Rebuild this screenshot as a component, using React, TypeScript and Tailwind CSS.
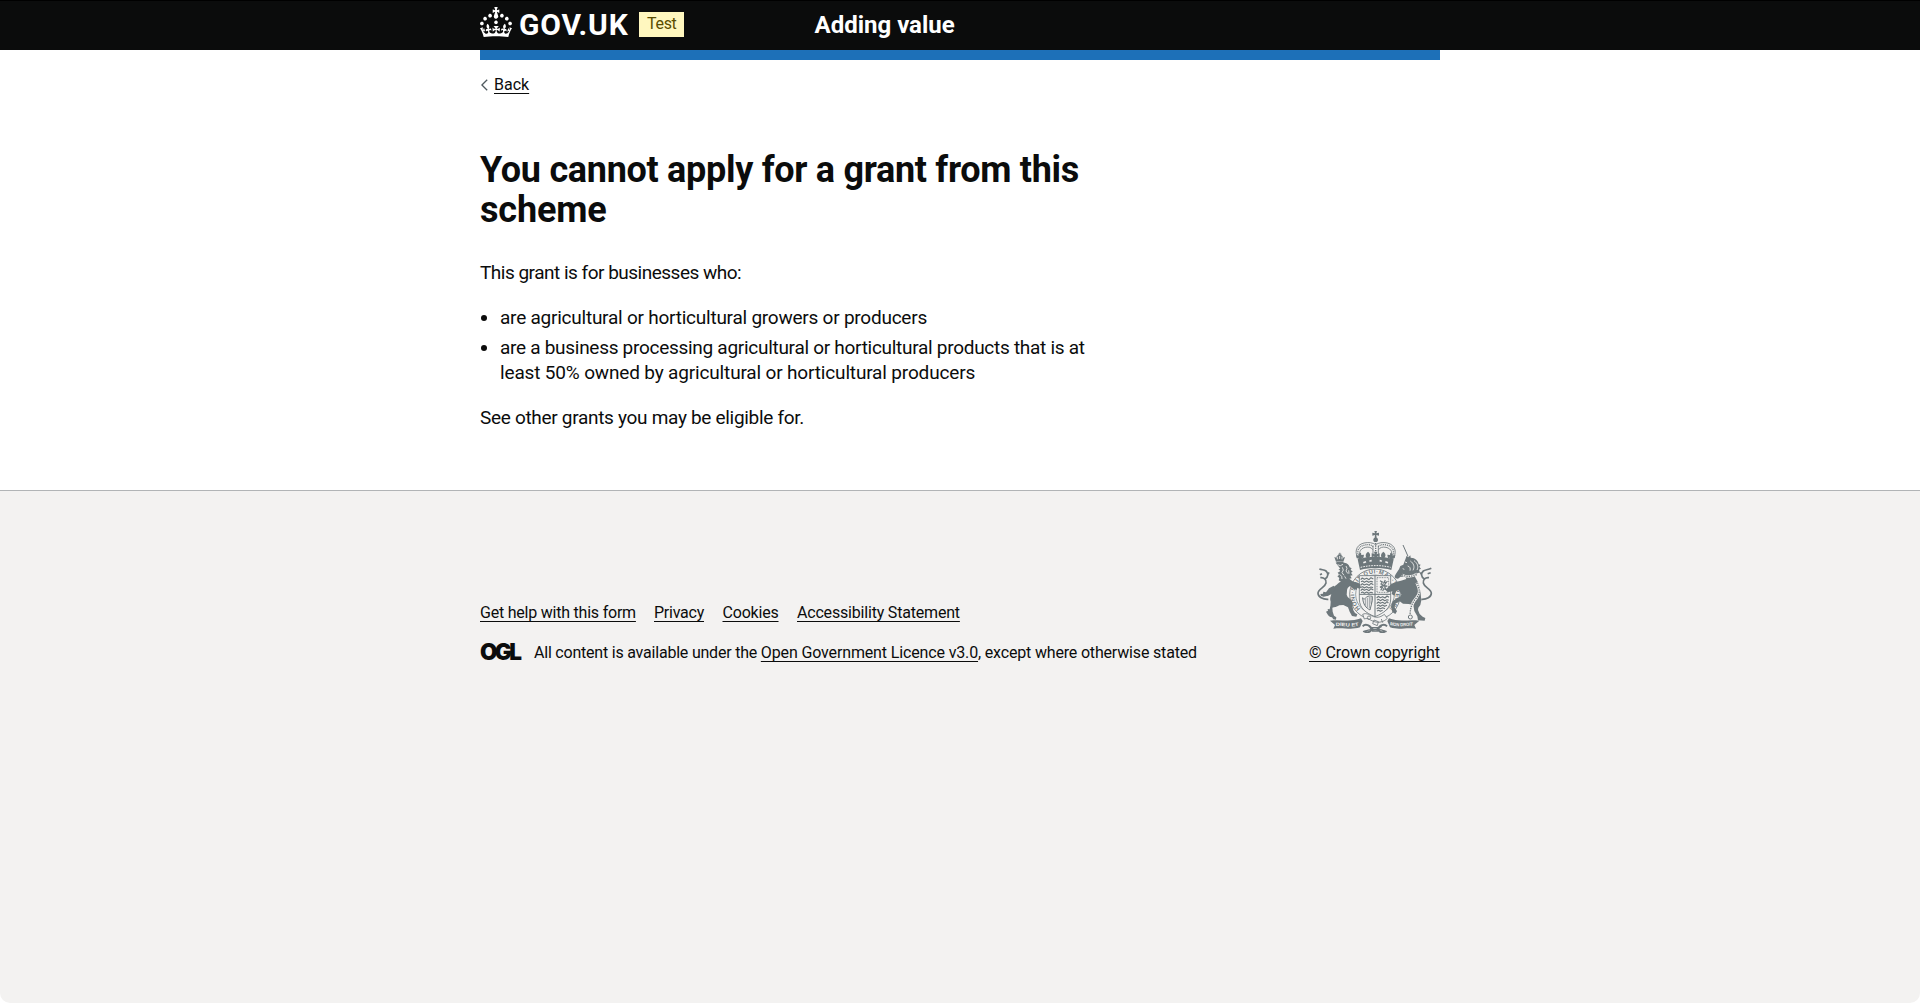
import type { ReactNode } from "react";

function Crown() {
  return (
    <svg className="h-[30px] w-8 fill-current" viewBox="0 0 32 30" aria-hidden="true">
      <path d="M22.6 10.4c-1 .4-2-.1-2.4-1-.4-.9.1-2 1-2.4.9-.4 2 .1 2.4 1s-.1 2-1 2.4m-5.9 6.7c-.9.4-2-.1-2.4-1-.4-.9.1-2 1-2.4.9-.4 2 .1 2.4 1s-.1 2-1 2.4m10.8-3.7c-1 .4-2-.1-2.4-1-.4-.9.1-2 1-2.4.9-.4 2 .1 2.4 1s0 2-1 2.4m3.3 4.8c-1 .4-2-.1-2.4-1-.4-.9.1-2 1-2.4.9-.4 2 .1 2.4 1s-.1 2-1 2.4M17 4.7l2.3 1.2V2.5l-2.3.7-.2-.2.9-3h-3.4l.9 3-.2.2c-.1.1-2.3-.7-2.3-.7v3.4L15 4.7c.1.1.1.2.2.2l-1.3 4c-.1.2-.1.4-.1.6 0 1.1.8 2 1.9 2.2h.7c1-.2 1.9-1.1 1.9-2.1 0-.2 0-.4-.1-.6l-1.3-4c-.1-.2 0-.2.1-.3m-7.6 5.7c.9.4 2-.1 2.4-1 .4-.9-.1-2-1-2.4-.9-.4-2 .1-2.4 1s0 2 1 2.4m-5 3c.9.4 2-.1 2.4-1 .4-.9-.1-2-1-2.4-.9-.4-2 .1-2.4 1s.1 2 1 2.4m-3.2 4.8c.9.4 2-.1 2.4-1 .4-.9-.1-2-1-2.4-.9-.4-2 .1-2.4 1s0 2 1 2.4m14.8 11c4.4 0 8.6.3 12.3.8 1.1-4.5 2.4-7 3.7-8.8l-2.5-.9c.2 1.3.3 1.9 0 2.7-.4-.4-.8-1.1-1.1-2.3l-1.2 4c.7-.5 1.3-.8 2-.9-1.1 2.5-2.6 3.1-3.5 3-1.1-.2-1.7-1.2-1.5-2.1.3-1.2 1.5-1.5 2.1-.1 1.1-2.3-.8-3-2-2.3 1.9-1.9 2.1-3.5.6-5.6-2.1 1.6-2.1 3.2-1.2 5.5-1.2-1.4-3.2-.6-2.5 1.6.9-1.4 2.1-.5 1.9.8-.2 1.1-1.7 2.1-3.5 1.9-2.7-.2-2.9-2.1-2.9-3.6.7-.1 1.9.5 2.9 1.9l.4-4.3c-1.1 1.1-2.1 1.4-3.2 1.4.4-1.2 2.1-3 2.1-3h-5.4s1.7 1.9 2.1 3c-1.1 0-2.1-.2-3.2-1.4l.4 4.3c1-1.4 2.2-2 2.9-1.9-.1 1.5-.2 3.4-2.9 3.6-1.9.2-3.4-.8-3.5-1.9-.2-1.3 1-2.2 1.9-.8.7-2.3-1.2-3-2.5-1.6.9-2.2.9-3.9-1.2-5.5-1.5 2-1.3 3.7.6 5.6-1.2-.7-3.1 0-2 2.3.6-1.4 1.8-1.1 2.1.1.2.9-.3 1.9-1.5 2.1-.9.2-2.4-.5-3.5-3 .6 0 1.2.3 2 .9l-1.2-4c-.3 1.1-.7 1.9-1.1 2.3-.3-.8-.2-1.4 0-2.7l-2.9.9C1.3 23 2.6 25.5 3.7 30c3.7-.5 7.9-.8 12.3-.8" />
    </svg>
  );
}

function Crest() {
  return (
    <svg className="h-[102px] w-[125px] text-[#6d777b]" viewBox="36 32 375 306" fill="none" stroke="currentColor" aria-hidden="true">
      {/* crown */}
      <path d="M223 32h8l-2 7 8-2v9l-8-2 1 8c5 2 6 10 0 13h-6c-6-3-5-11 0-13l1-8-8 2v-9l8 2z" fill="currentColor" stroke="none" />
      <path d="M179 122C161 99 166 74 192 68c14-3 26-1 35 5 9-6 21-8 35-5 26 6 31 31 13 54" strokeWidth="2.5" />
      <path d="M187 118c-14-18-9-33 9-37 11-2 18 0 22 7M267 118c14-18 9-33-9-37-11-2-18 0-22 7" strokeWidth="2.5" />
      <path d="M183 120C167 100 171 79 194 74c11-2 19-1 26 5M271 120c16-20 12-41-11-46-11-2-19-1-26 5" strokeWidth="4" strokeDasharray="3 2.5" />
      <path d="M219 76v26M235 76v26" strokeWidth="2.5" />
      <path d="M227 68v34" strokeWidth="4" strokeDasharray="4 3" />
      <path d="M173 117c35-10 73-10 108 0l-7 32c-30-8-64-8-94 0z" fill="currentColor" stroke="none" />
      <path d="M182 141c29-7 61-7 90 0" stroke="#f3f2f1" strokeWidth="3" strokeDasharray="5 3" />
      <path d="M190 127l8-3M208 122l7-1M239 121l7 1M256 124l8 3" stroke="#f3f2f1" strokeWidth="5" />
      <g fill="currentColor" stroke="none">
        <path d="M222 94h10l-2 8 9-3v12l-8-3 3 11h-14l3-11-8 3V99l9 3zM176 100l7-3 1 7 8-1-2 11-6-2 2 9-9 1-2-10-5 2-2-10 8 2zM278 100l-7-3-1 7-8-1 2 11 6-2-2 9 9 1 2-10 5 2 2-10-8 2z" />
        <path d="M204 94c8 6 8 13 3 18l4 8h-14l3-8c-5-5-4-12 4-18zM250 94c8 6 8 13 3 18l4 8h-14l3-8c-5-5-4-12 4-18z" />
      </g>

      {/* garter */}
      <circle cx="225" cy="222" r="76" fill="#f3f2f1" strokeWidth="2.5" />
      <circle cx="225" cy="222" r="58" strokeWidth="2" />
      <defs>
        <path id="garter" d="M190 273a62 62 0 1 1 70 0" />
      </defs>
      <text fill="currentColor" stroke="none" className="font-['Liberation_Sans'] text-[17px] font-bold">
        <textPath href="#garter" startOffset="12" textLength="292">HONI·SOIT·QUI·MAL·Y·PENSE</textPath>
      </text>

      {/* shield */}
      <path d="M178 166h94v70c0 28-20 42-47 53-27-11-47-25-47-53z" fill="#f3f2f1" strokeWidth="2.5" />
      <path d="M225 166v122M178 222h94" strokeWidth="3" />
      <g strokeWidth="3.5" strokeLinejoin="round">
        <path d="M182 178l5-5 6 4 7-3 7 4 6-6 7 4M183 184l5-2 5 4 7-4 6 4 7-3 6 2" />
        <path d="M182 195l5-5 6 4 7-3 7 4 6-6 7 4M183 201l5-2 5 4 7-4 6 4 7-3 6 2" />
        <path d="M182 211l5-5 6 4 7-3 7 4 6-6 7 4M183 217l5-2 5 4 7-4 6 4 7-3 6 2" />
        <path d="M230 233l5-5 6 4 7-3 7 4 6-6 6 4M231 239l5-2 5 4 7-4 6 4 7-3 5 2" />
        <path d="M230 250l5-5 6 4 7-3 7 4 6-6 4 4M231 256l5-2 5 4 7-4 6 4 7-3" />
        <path d="M230 266l5-4 6 3 7-3 7 3M231 272l5-2 5 3 7-3" />
      </g>
      <path d="M231 172h35v44h-35z" strokeWidth="2.5" strokeDasharray="3 2" />
      <path d="M240 181l7 4-4 6 7 3-10 7 8-1-6 10M256 179l-5 9 9-3-8 11 10 1-8 3 6 9-9-4-3 7" strokeWidth="3.5" />
      <path d="M188 232c3 9 7 2 12-2s9-3 17-2v12l-7 29c-12-6-21-17-22-37z" strokeWidth="3" />
      <path d="M196 235v21M202 232v30M208 230v34M213 230v20" strokeWidth="2" />

      {/* lion */}
      <g fill="currentColor" stroke="none">
        <path d="M108 124l-5-14 6 2c1-7 5-9 10-9s9 2 10 9l6-2-5 14c-7-2-15-2-22 0z" />
        <path d="M118 97h3v3h3v3h-9v-3h3z" />
        <path d="M107 127c8-5 18-5 26 0 9 1 14 6 16 14l6 3-3 4 6 6-5 3 5 8-7 1 4 8-7 1c8 7 13 10 18 11l8 1 8 6-2 4 5 4-7 4-6-3-2 6-8-1-12-10c-6 4-9 8-9 14l-1 12 3 7 10 8 6 9-2 10 3 13 5 8 7 4-3 7-13-2-7-13-5-13-14-7-12 1c-8 5-15 6-21 7l1 12 4 12 7 5-1 7-8-1-4-6c-7-1-11-4-14-10l-4-7 6-3-1-5 6 1c2-8 3-15 3-23-3-7-1-14 2-22-5 2-9 5-13 5l2-6c9-12 17-22 27-28 6-6 10-9 13-9l-7-4 2-7-6-5 5-4-4-8 6-2-3-8 5-1z" />
        <path d="M101 196l-14 8-9 12-8-2-1 6-8 1 2 6 8 2 13-3 10-10 14-7z" />
      </g>
      <path d="M85 237c-16 1-31-7-31-18 0-13 21-17 24-31 2-9-6-18-17-16M75 176c10-6 11-17 3-24-5-4-11-3-20-6M66 160l-6 3M84 162l3-6" strokeWidth="5" />
      <path d="M112 109v8M119 107v9M126 109v8" stroke="#f3f2f1" strokeWidth="2.5" />
      <path d="M113 133l8 3 8-4M109 142l8 3M112 151l7-1-4 6M127 141l3 8-4 8 6 8M138 137l3 7-3 8 6 8M119 162l6 6 1 8M134 168l4 7M146 150l1 10" stroke="#f3f2f1" strokeWidth="2.5" />

      {/* unicorn */}
      <path d="M309 74l15 34" strokeWidth="3" />
      <g fill="currentColor" stroke="none">
        <path d="M320 106l5 5 6-6 1 7c14 1 22 8 24 20l6 1-4 6 5 6-6 3 3 9-8 1-2 8-6 2 8 14c8 14 8 27 10 38l2 20-3 14-6 8-1 7 5 12 9 8 8 4-2 8-20-1-2-12-9-16-3-18-14-3-17-1-10-7-13 7-2 11 7 12-5 8-9-6-4-17 5-15c8-7 16-12 24-15l2-6-8-14-7 4-6 14-8-5 2-8-14 3-6-8 14-14c6-7 19-10 32-13l16-5-3-6-14-1-8 6-8-1-2-6c4-9 9-15 13-21l4-10 9-4z" />
      </g>
      <path d="M315 125l6 2M331 122c10 7 14 17 8 28M342 121c11 8 14 18 9 28M323 137c7 2 9 7 7 14M308 145l5 2" stroke="#f3f2f1" strokeWidth="2.5" />
      <path d="M306 163c14 8 31 6 45-3" stroke="#f3f2f1" strokeWidth="7" />
      <path d="M306 163c14 8 31 6 45-3" strokeWidth="4" strokeDasharray="4 3" />
      <path d="M364 237c16 1 30-7 30-18 0-13-21-17-24-31-2-9 6-18 17-16M373 176c-10-6-11-17-3-24 5-4 14-3 24-8M383 160l9-3M364 162l-3-6" strokeWidth="5" />
      <path d="M350 187c10 20 11 33-1 46-12 13-18 27-19 51" stroke="#f3f2f1" strokeWidth="8" />
      <path d="M350 187c10 20 11 33-1 46-12 13-18 27-19 51" strokeWidth="4" strokeDasharray="4 3" />
      <circle cx="331" cy="290" r="6" strokeWidth="3" />

      {/* buckle, motto and compartment */}
      <path d="M188 282c12-6 22 3 33 7 13 5 24-1 32-7l9 12c-11 11-26 15-42 9-12-5-18-11-27-7z" fill="#f3f2f1" strokeWidth="2.5" />
      <circle cx="207" cy="292" r="5" strokeWidth="2.5" />
      <path d="M222 299l13 5-3 12-14-6zM244 296l4 11" strokeWidth="2.5" />
      <path d="M90 301c30-5 62 5 93-7l5 8-8 19c-30 9-49-1-80 4l5-11zM358 301c-30-5-60 5-91-7l-5 8 8 19c30 9 47-1 78 4l-5-11z" fill="currentColor" stroke="none" />
      <path d="M188 318c8-9 24-3 26 8 0 9-13 12-21 7M261 318c-8-9-24-3-26 8 0 9 13 12 21 7" strokeWidth="6" />
      <path d="M189 334c25-9 50-9 71 0M207 318l9 5M245 318l-9 5M218 322h14v10h-14z" strokeWidth="4" />
      <path id="motto-left" d="M107 317c26-2 46 5 72-2" stroke="none" />
      <path id="motto-right" d="M269 314c27 8 48 1 72 3" stroke="none" />
      <g fill="#f3f2f1" stroke="none" className="font-['Liberation_Sans'] text-[14px] font-bold">
        <text><textPath href="#motto-left" textLength="70" lengthAdjust="spacingAndGlyphs">DIEU ET</textPath></text>
        <text><textPath href="#motto-right" textLength="70" lengthAdjust="spacingAndGlyphs">MON DROIT</textPath></text>
      </g>
    </svg>
  );
}

function TextLink({ className = "", children }: { className?: string; children: ReactNode }) {
  return (
    <a href="#" className={"underline decoration-1 underline-offset-[3px] " + className}>
      {children}
    </a>
  );
}

export default function App() {
  return (
    <div className="min-h-screen bg-white font-[Roboto,sans-serif] text-[#0b0c0c]">
      <div className="flex min-h-screen flex-col overflow-hidden rounded-b-[10px] bg-[#f3f2f1]">
        <header className="h-[50px] border-t border-black bg-[#0b0c0c] text-white">
          <div className="mx-auto flex w-[960px] items-start">
            <div className="flex w-[334.5px] items-start">
              <div className="pt-1.5">
                <Crown />
              </div>
              <span className="ml-[7px] mt-1.5 w-[110px] text-[30px] leading-[36px] font-bold tracking-[0.8px]">GOV.UK</span>
              <strong className="ml-2.5 mt-[11px] h-[25px] w-[45px] bg-[#fff7bf] pl-2 text-base leading-6 font-normal tracking-[-0.3px] text-[#594d00]">
                Test
              </strong>
            </div>
            <span className="mt-2 text-2xl leading-[32px] font-bold">Adding value</span>
          </div>
        </header>

        <div className="bg-white">
          <div className="mx-auto w-[960px]">
            <div className="h-2.5 bg-[#1d70b8]" />
            <div className="mt-[15px] flex h-5 items-center">
              <svg className="ml-px h-3 w-[7px] text-[#505a5f]" viewBox="0 0 7 12" fill="none" stroke="currentColor" strokeWidth="1.3">
                <path d="M6.2.7.9 6l5.3 5.3" />
              </svg>
              <TextLink className="ml-1.5 text-base leading-5">Back</TextLink>
            </div>

            <main className="pt-[55px] pb-[60px] text-[19px] leading-[25px]">
              <h1 className="text-4xl leading-10 font-bold">
                <span className="block tracking-[-0.3px]">You cannot apply for a grant from this</span>
                <span className="block tracking-[-0.15px]">scheme</span>
              </h1>
              <p className="mt-[30px] tracking-[-0.5px]">This grant is for businesses who:</p>
              <ul className="mt-5 list-disc pl-5">
                <li className="tracking-[-0.235px]">are agricultural or horticultural growers or producers</li>
                <li className="mt-[5px]">
                  <span className="tracking-[-0.285px]">
                    are a business processing agricultural or horticultural products that is at
                  </span>
                  <br />
                  <span className="tracking-[-0.16px]">least 50% owned by agricultural or horticultural producers</span>
                </li>
              </ul>
              <p className="mt-5 tracking-[-0.305px]">See other grants you may be eligible for.</p>
            </main>
          </div>
        </div>

        <footer className="grow border-t border-[#b1b4b6]">
          <div className="mx-auto flex w-[960px] items-end justify-between pt-10 text-base leading-5">
            <div>
              <nav className="flex">
                <TextLink className="mr-[18px] w-[156px] tracking-[-0.22px]">Get help with this form</TextLink>
                <TextLink className="mr-[18.5px] w-[50px] tracking-[-0.24px]">Privacy</TextLink>
                <TextLink className="mr-[18.5px] w-14 tracking-[-0.2px]">Cookies</TextLink>
                <TextLink className="tracking-[-0.19px]">Accessibility Statement</TextLink>
              </nav>
              <div className="mt-5 flex">
                <span className="w-[54px] font-[Inter] text-[22.5px] leading-[18px] font-black tracking-[-2.6px]">OGL</span>
                <p>
                  <span className="tracking-[-0.21px]">All content is available under the </span>
                  <TextLink className="tracking-[-0.14px]">Open Government Licence v3.0</TextLink>
                  <span className="tracking-[-0.175px]">, except where otherwise stated</span>
                </p>
              </div>
            </div>
            <div className="flex flex-col items-center">
              <Crest />
              <TextLink className="mt-2.5 tracking-[-0.09px]">© Crown copyright</TextLink>
            </div>
          </div>
        </footer>
      </div>
    </div>
  );
}
